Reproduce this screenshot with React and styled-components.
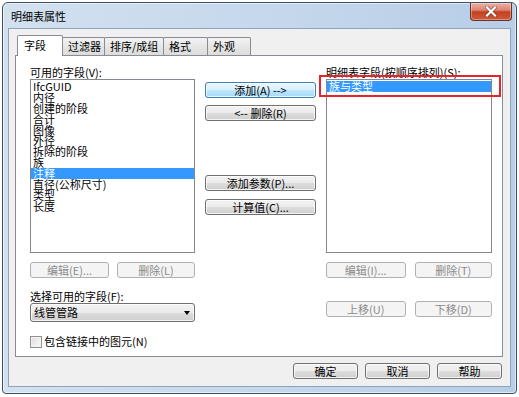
import React from "react";
import styled, { createGlobalStyle, css } from "styled-components";

const GlobalStyle = createGlobalStyle`
  html, body {
    margin: 0;
    padding: 0;
    background: #ffffff;
  }
  body {
    font-family: "Noto Sans CJK SC", "Liberation Sans", sans-serif;
    font-size: 11px;
    color: #000;
  }
`;

const uiFont = `"Noto Sans CJK SC", "Liberation Sans", sans-serif`;

const Window = styled.div`
  box-sizing: border-box;
  width: 515px;
  height: 392px;
  margin: 2px 0 0 2px;
  border: 1px solid #3f4f63;
  border-radius: 6px 6px 4px 4px;
  background: linear-gradient(to right, #d3e1ef, #c4d7ec 55%, #b7cee7);
  box-shadow: inset 0 0 0 1px rgba(255, 255, 255, 0.55);
  display: flex;
  flex-direction: column;
  padding: 0 5px 6px 5px;
`;

const TitleBar = styled.div`
  height: 25px;
  display: flex;
  align-items: center;
  justify-content: space-between;
  padding-left: 3px;
`;

const Title = styled.span`
  font: 11px/12px ${uiFont};
  color: #000;
  margin-top: 1px;
`;

const CloseButton = styled.div`
  box-sizing: border-box;
  align-self: flex-start;
  width: 42px;
  height: 18px;
  margin-right: -1px;
  border: 1px solid #6b3027;
  border-top: none;
  border-radius: 0 0 4px 4px;
  background: linear-gradient(#eab1a4 0%, #dc8471 42%, #c4411f 52%, #cc5a3c 100%);
  box-shadow: inset 0 0 0 1px rgba(255, 255, 255, 0.35);
  display: flex;
  align-items: center;
  justify-content: center;
`;

const Client = styled.div`
  box-sizing: border-box;
  flex: 1;
  background: #f0f0f0;
  border: 1px solid #8ea4bc;
  padding: 6px 7px 0 6px;
  display: flex;
  flex-direction: column;
`;

const TabStrip = styled.div`
  height: 20px;
  display: flex;
  align-items: flex-end;
  padding-left: 2px;
  position: relative;
  z-index: 1;
`;

const Tab = styled.div`
  box-sizing: border-box;
  width: ${p => p.$w}px;
  height: 18px;
  margin-right: -1px;
  padding-left: 5px;
  border: 1px solid #898c95;
  border-bottom: none;
  border-radius: 2px 2px 0 0;
  background: linear-gradient(#f3f3f3, #e6e6e6 50%, #dcdcdc);
  font: 11px/17px ${uiFont};
  white-space: nowrap;
  ${p =>
    p.$active &&
    css`
      height: 21px;
      margin-bottom: -1px;
      padding-left: 6px;
      background: #ffffff;
      line-height: 19px;
      position: relative;
      z-index: 2;
    `}
`;

const TabPanel = styled.div`
  box-sizing: border-box;
  position: relative;
  height: 302px;
  border: 1px solid #898c95;
  background: #ffffff;
  display: grid;
  grid-template-columns: 165px 111px 166px;
  column-gap: 10px;
  align-items: start;
  padding: 10px 10px 0 14px;
`;

const Column = styled.div`
  display: flex;
  flex-direction: column;
  padding-top: ${p => p.$top || 0}px;
`;

const FieldLabel = styled.div`
  height: 12px;
  font: 11px/12px ${uiFont};
  white-space: nowrap;
  margin-top: ${p => p.$mt || 0}px;
`;

const ListBox = styled.div`
  box-sizing: border-box;
  margin-top: 1px;
  height: 174px;
  padding-top: 1px;
  border: 1px solid #828790;
  background: #ffffff;
`;

const ListItem = styled.div`
  height: 10.9px;
  padding-left: 2px;
  font: 11px/11px ${uiFont};
  white-space: nowrap;
  color: ${p => (p.$selected ? "#ffffff" : "#000000")};
  background: ${p => (p.$selected ? "#3399ff" : "transparent")};
`;

const Button = styled.button`
  box-sizing: border-box;
  width: ${p => p.$w}px;
  height: 16px;
  margin: 0;
  margin-top: ${p => p.$mt || 0}px;
  padding: 0;
  font: 11px/14px ${uiFont};
  color: #000000;
  border: 1px solid #707070;
  border-radius: 3px;
  background: linear-gradient(#f2f2f2 0%, #ebebeb 50%, #dddddd 51%, #cfcfcf 100%);
  box-shadow: inset 0 0 0 1px rgba(255, 255, 255, 0.75);
  white-space: nowrap;

  &:disabled {
    border-color: #adb2b5;
    background: #f4f4f4;
    color: #8a8a8a;
    box-shadow: none;
  }

  ${p =>
    p.$default &&
    css`
      border-color: #3c7fb1;
      background: linear-gradient(#eaf6fd 0%, #d9f0fc 50%, #bee6fd 51%, #a7d9f5 100%);
    `}
`;

const ButtonRow = styled.div`
  display: flex;
  gap: ${p => p.$gap || 8}px;
  justify-content: ${p => (p.$end ? "flex-end" : "flex-start")};
  margin-top: ${p => p.$mt || 0}px;
`;

const Combo = styled.div`
  box-sizing: border-box;
  margin-top: 1px;
  height: 19px;
  border: 1px solid #707070;
  border-radius: 3px;
  background: linear-gradient(#f2f2f2 0%, #ebebeb 50%, #dddddd 51%, #cfcfcf 100%);
  box-shadow: inset 0 0 0 1px rgba(255, 255, 255, 0.75);
  display: flex;
  align-items: center;
  justify-content: space-between;
  padding: 0 4px 0 3px;
  font: 11px/17px ${uiFont};
`;

const Arrow = styled.span`
  width: 0;
  height: 0;
  border-left: 3.5px solid transparent;
  border-right: 3.5px solid transparent;
  border-top: 4px solid #000;
`;

const CheckRow = styled.label`
  display: flex;
  align-items: center;
  gap: 2px;
  margin-top: 13px;
  font: 11px/13px ${uiFont};
  white-space: nowrap;
`;

const CheckBox = styled.span`
  box-sizing: border-box;
  width: 12px;
  height: 12px;
  border: 1px solid #8e8f8f;
  background: linear-gradient(135deg, #dcdcdc, #fbfbfb);
  box-shadow: inset 0 0 0 1px #f4f4f4;
`;

const Highlight = styled.div`
  position: absolute;
  left: 303px;
  top: 19px;
  width: 182px;
  height: 22px;
  box-sizing: border-box;
  border: 2px solid #e4232a;
  pointer-events: none;
`;

const Footer = styled.div`
  display: flex;
  justify-content: flex-end;
  gap: 7px;
  margin-top: 6px;
  padding-right: 1px;
`;

const available = [
  "IfcGUID",
  "内径",
  "创建的阶段",
  "合计",
  "图像",
  "外径",
  "拆除的阶段",
  "族",
  "注释",
  "直径(公称尺寸)",
  "类型",
  "长度",
];

const tabs = [
  ["字段", 46],
  ["过滤器", 43],
  ["排序/成组", 60],
  ["格式", 45],
  ["外观", 44],
];

export default function App() {
  return (
    <>
      <GlobalStyle />
      <Window>
        <TitleBar>
          <Title>明细表属性</Title>
          <CloseButton>
            <svg width="12" height="11" viewBox="0 0 12 11">
              <path d="M2 1.5 L10 9.5 M10 1.5 L2 9.5" stroke="#5a1e14" strokeWidth="3.6" strokeLinecap="square" opacity="0.55" />
              <path d="M2 1.5 L10 9.5 M10 1.5 L2 9.5" stroke="#ffffff" strokeWidth="2.2" strokeLinecap="square" />
            </svg>
          </CloseButton>
        </TitleBar>
        <Client>
          <TabStrip>
            {tabs.map(([t, w], i) => (
              <Tab key={t} $w={w} $active={i === 0}>
                {t}
              </Tab>
            ))}
          </TabStrip>
          <TabPanel>
            <Column>
              <FieldLabel>可用的字段(V):</FieldLabel>
              <ListBox>
                {available.map(f => (
                  <ListItem key={f} $selected={f === "注释"}>
                    {f}
                  </ListItem>
                ))}
              </ListBox>
              <ButtonRow $mt={9}>
                <Button $w={79} disabled>编辑(E)...</Button>
                <Button $w={78} disabled>删除(L)</Button>
              </ButtonRow>
              <FieldLabel $mt={12}>选择可用的字段(F):</FieldLabel>
              <Combo>
                <span>线管管路</span>
                <Arrow />
              </Combo>
              <CheckRow>
                <CheckBox />
                包含链接中的图元(N)
              </CheckRow>
            </Column>

            <Column $top={16}>
              <Button $w={111} $default>添加(A) --&gt;</Button>
              <Button $w={111} $mt={7}>&lt;-- 删除(R)</Button>
              <Button $w={111} $mt={54}>添加参数(P)...</Button>
              <Button $w={111} $mt={8}>计算值(C)...</Button>
            </Column>

            <Column>
              <FieldLabel>明细表字段(按顺序排列)(S):</FieldLabel>
              <ListBox>
                <ListItem $selected>族与类型</ListItem>
              </ListBox>
              <ButtonRow $mt={9} $gap={9} $end>
                <Button $w={80} disabled>编辑(I)...</Button>
                <Button $w={78} disabled>删除(T)</Button>
              </ButtonRow>
              <ButtonRow $mt={23} $gap={9} $end>
                <Button $w={80} disabled>上移(U)</Button>
                <Button $w={78} disabled>下移(D)</Button>
              </ButtonRow>
            </Column>

            <Highlight />
          </TabPanel>
          <Footer>
            <Button $w={65}>确定</Button>
            <Button $w={65}>取消</Button>
            <Button $w={65}>帮助</Button>
          </Footer>
        </Client>
      </Window>
    </>
  );
}
